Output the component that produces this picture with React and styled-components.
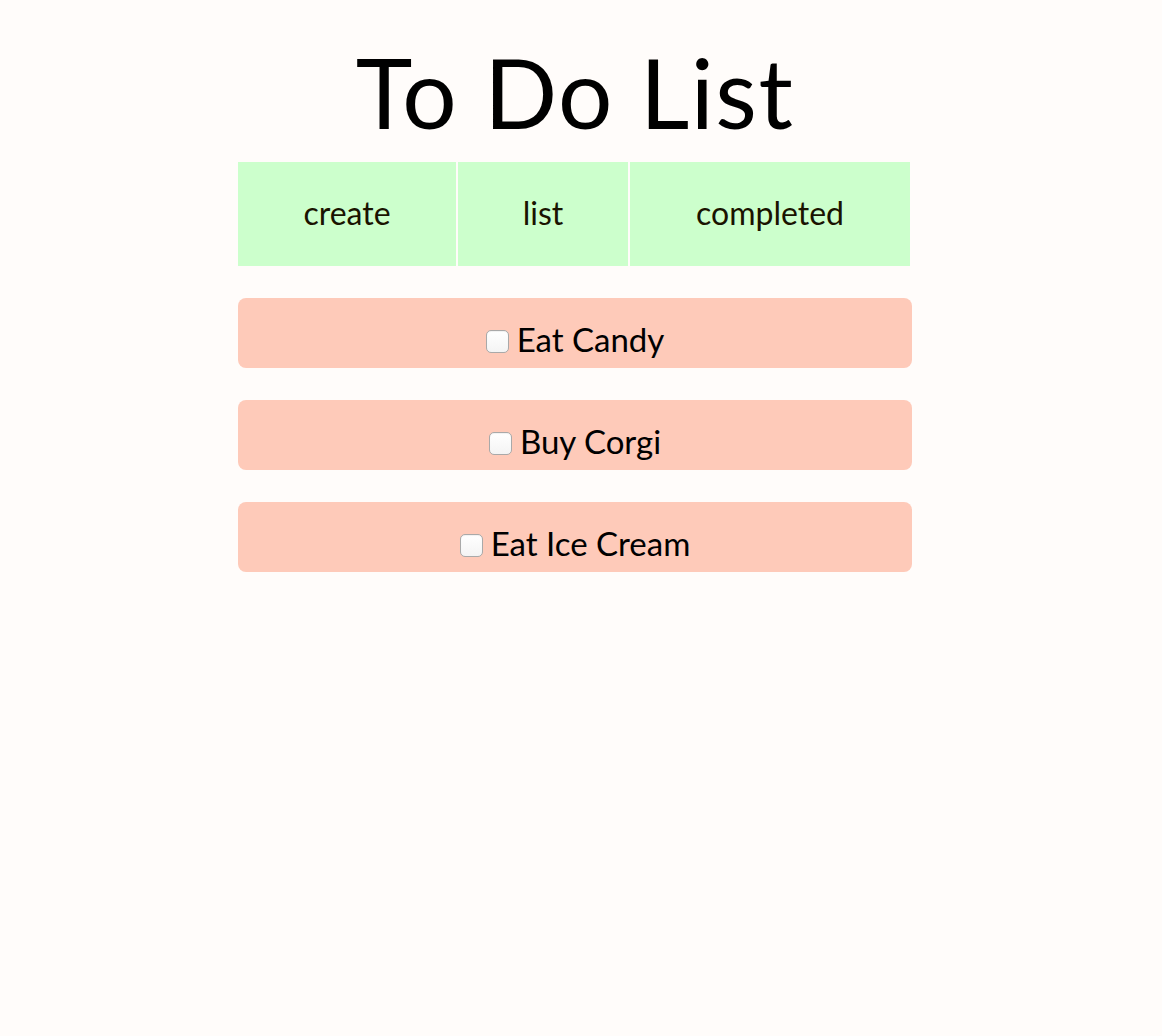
import React from "react";
import styled, { createGlobalStyle } from "styled-components";

const Global = createGlobalStyle`
  html, body {
    margin: 0;
    padding: 0;
    background: #fffcfa;
    font-family: Lato, "Noto Sans", sans-serif;
  }
`;

const Page = styled.div`
  width: 1150px;
  display: flex;
  flex-direction: column;
  align-items: center;
`;

const Column = styled.main`
  width: 674px;
  display: flex;
  flex-direction: column;
`;

const Title = styled.h1`
  margin: 0;
  padding-top: 44px;
  height: 162px;
  box-sizing: border-box;
  text-align: center;
  font-size: 96px;
  font-weight: 400;
  letter-spacing: 1.5px;
  line-height: 1;
  color: #000;
`;

const Tabs = styled.nav`
  display: grid;
  grid-template-columns: 218px 170px 280px;
  gap: 2px;
  margin-bottom: 32px;
`;

const Tab = styled.a`
  height: 104px;
  display: flex;
  align-items: center;
  justify-content: center;
  background: #ccffcc;
  color: #1a1300;
  font-size: 32px;
  padding-bottom: 4px;
  box-sizing: border-box;
  text-decoration: none;
  cursor: pointer;
`;

const List = styled.ul`
  list-style: none;
  margin: 0;
  padding: 0;
  display: flex;
  flex-direction: column;
  gap: 32px;
`;

const Item = styled.li`
  height: 70px;
  border-radius: 8px;
  background: #fecab9;
  display: flex;
  align-items: center;
  justify-content: center;
  padding-top: 12px;
  box-sizing: border-box;
  font-size: 33px;
  color: #000;
`;

const Label = styled.label`
  display: flex;
  align-items: center;
  gap: 8px;
`;

const Check = styled.input.attrs({ type: "checkbox" })`
  appearance: none;
  margin: 5px 0 0 0;
  width: 23px;
  height: 23px;
  border: 1px solid #a9a9a9;
  border-radius: 5px;
  background: linear-gradient(#ffffff, #f4f4f4);
  box-shadow: inset 0 1px 1px rgba(0,0,0,0.06);
  box-sizing: border-box;
`;

const todos = ["Eat Candy", "Buy Corgi", "Eat Ice Cream"];

export default function App() {
  return (
    <>
      <Global />
      <Page>
        <Column>
          <Title>To Do List</Title>
          <Tabs>
            <Tab>create</Tab>
            <Tab>list</Tab>
            <Tab>completed</Tab>
          </Tabs>
          <List>
            {todos.map((t) => (
              <Item key={t}>
                <Label>
                  <Check />
                  {t}
                </Label>
              </Item>
            ))}
          </List>
        </Column>
      </Page>
    </>
  );
}
